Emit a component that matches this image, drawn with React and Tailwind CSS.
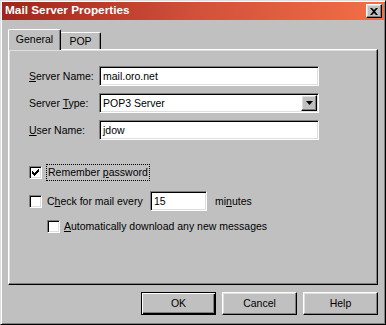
import React from "react";

const raised =
  "border border-t-white border-l-white border-r-black border-b-black shadow-[inset_-1px_-1px_#808080,inset_1px_1px_#dfdfdf]";
const sunken =
  "border border-t-[#808080] border-l-[#808080] border-r-white border-b-white shadow-[inset_1px_1px_#000,inset_-1px_-1px_#dfdfdf]";

function Check({ checked }) {
  return (
    <div className={`flex h-[13px] w-[13px] shrink-0 items-center justify-center bg-white ${sunken}`}>
      {checked && (
        <svg width="7" height="7" viewBox="0 0 7 7">
          <path d="M0 2h1v1h1v1h1V3h1V2h1V1h1V0h1v3H6v1H5v1H4v1H3v1H2V6H1V5H0z" fill="#000" />
        </svg>
      )}
    </div>
  );
}

function Field({ hotkey, rest, value, select }) {
  return (
    <div className="flex h-[20px] items-center">
      <div className="w-[70px]">
        <span className="underline underline-offset-1">{hotkey}</span>
        {rest}
      </div>
      <div className={`flex h-[20px] w-[220px] items-center bg-white ${sunken}`}>
        <span className="flex-1 pl-[3px]">{value}</span>
        {select && (
          <div className={`mr-px flex h-[16px] w-[16px] items-center justify-center bg-[#c0c0c0] ${raised}`}>
            <svg width="7" height="4" viewBox="0 0 7 4">
              <path d="M0 0h7L3.5 4z" fill="#000" />
            </svg>
          </div>
        )}
      </div>
    </div>
  );
}

export default function App() {
  return (
    <div className="flex h-[325px] w-[386px] flex-col border border-t-[#dfdfdf] border-l-[#dfdfdf] border-r-black border-b-black bg-[#c0c0c0] p-px font-['Liberation_Sans',Arial,sans-serif] text-[10.5px] leading-none text-black shadow-[inset_1px_1px_#fff,inset_-1px_-1px_#808080]">
      {/* title bar */}
      <div className="flex h-[18px] items-center justify-between bg-linear-to-r from-[#a0241a] via-[#d0503a] to-[#f36f46] pl-[3px] pr-[2px]">
        <span className="text-[11.8px] font-bold text-white">Mail Server Properties</span>
        <div className={`flex h-[14px] w-[16px] items-center justify-center bg-[#c0c0c0] ${raised}`}>
          <svg width="8" height="7" viewBox="0 0 8 7">
            <path d="M0 0h2l2 2 2-2h2L5 3.5 8 7H6L4 5 2 7H0l3-3.5z" fill="#000" />
          </svg>
        </div>
      </div>

      {/* tabs */}
      <div className="mt-[9px] flex h-[20px] px-[6px]">
        <div className="relative z-10 flex h-[21px] w-[53px] items-center justify-center self-start rounded-tl-[2px] rounded-tr-[2px] border-t border-l border-r border-t-white border-l-white border-r-black bg-[#c0c0c0] pb-px shadow-[inset_-1px_0_#808080]">
          General
        </div>
        <div className="flex h-[17px] w-[40px] items-center justify-center self-end rounded-tr-[2px] border-t border-r border-t-white border-r-black shadow-[inset_-1px_0_#808080]">
          POP
        </div>
      </div>

      {/* panel */}
      <div className={`mx-[6px] flex h-[236px] flex-col pl-[20px] pt-[16px] ${raised}`}>
        <div className="flex flex-col gap-[7px]">
          <Field hotkey="S" rest="erver Name:" value="mail.oro.net" />
          <Field hotkey="" rest={<>Server <span className="underline underline-offset-1">T</span>ype:</>} value="POP3 Server" select />
          <Field hotkey="U" rest="ser Name:" value="jdow" />
        </div>

        <div className="mt-[26px] flex h-[13px] items-center">
          <Check checked />
          <span className="ml-[4px] border border-dotted border-black px-px py-[2px]">
            Remember <span className="underline underline-offset-1">p</span>assword
          </span>
        </div>

        <div className="mt-[12px] flex h-[20px] items-center">
          <Check />
          <span className="ml-[5px] w-[103px]">
            C<span className="underline underline-offset-1">h</span>eck for mail every
          </span>
          <div className={`flex h-[20px] w-[57px] items-center bg-white pl-[3px] ${sunken}`}>15</div>
          <span className="ml-[8px]">
            mi<span className="underline underline-offset-1">n</span>utes
          </span>
        </div>

        <div className="mt-[9px] flex h-[13px] items-center pl-[18px]">
          <Check />
          <span className="ml-[4px]">
            <span className="underline underline-offset-1">A</span>utomatically download any new messages
          </span>
        </div>
      </div>

      {/* buttons */}
      <div className="mt-[7px] flex justify-end gap-[6px] pr-[6px]">
        <button className="flex h-[23px] w-[75px] items-center justify-center border border-black bg-[#c0c0c0] shadow-[inset_1px_1px_#fff,inset_-1px_-1px_#000,inset_-2px_-2px_#808080]">
          OK
        </button>
        <button className={`flex h-[23px] w-[75px] items-center justify-center bg-[#c0c0c0] ${raised}`}>
          Cancel
        </button>
        <button className={`flex h-[23px] w-[75px] items-center justify-center bg-[#c0c0c0] ${raised}`}>
          Help
        </button>
      </div>
    </div>
  );
}
